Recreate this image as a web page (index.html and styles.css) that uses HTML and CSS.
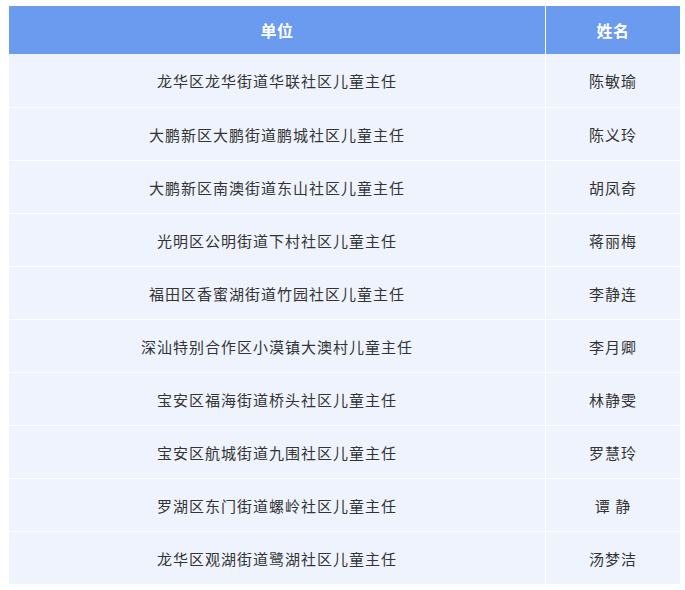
FILE: index.html
```html
<!DOCTYPE html>
<html lang="zh">
<head>
<meta charset="utf-8">
<link rel="stylesheet" href="styles.css">
</head>
<body>
<table class="roster">
  <thead>
    <tr><th class="unit">单位</th><th class="name">姓名</th></tr>
  </thead>
  <tbody>
    <tr><td>龙华区龙华街道华联社区儿童主任</td><td>陈敏瑜</td></tr>
    <tr><td>大鹏新区大鹏街道鹏城社区儿童主任</td><td>陈义玲</td></tr>
    <tr><td>大鹏新区南澳街道东山社区儿童主任</td><td>胡凤奇</td></tr>
    <tr><td>光明区公明街道下村社区儿童主任</td><td>蒋丽梅</td></tr>
    <tr><td>福田区香蜜湖街道竹园社区儿童主任</td><td>李静连</td></tr>
    <tr><td>深汕特别合作区小漠镇大澳村儿童主任</td><td>李月卿</td></tr>
    <tr><td>宝安区福海街道桥头社区儿童主任</td><td>林静雯</td></tr>
    <tr><td>宝安区航城街道九围社区儿童主任</td><td>罗慧玲</td></tr>
    <tr><td>罗湖区东门街道螺岭社区儿童主任</td><td>谭 静</td></tr>
    <tr><td>龙华区观湖街道鹭湖社区儿童主任</td><td>汤梦洁</td></tr>
  </tbody>
</table>
</body>
</html>
```

FILE: styles.css
```css
html, body {
  margin: 0;
  padding: 0;
  background: #ffffff;
}
body {
  padding: 6px 5px 0 9px;
  font-family: "Noto Sans CJK SC", "Noto Sans", sans-serif;
}
.roster {
  width: 671px;
  border-collapse: collapse;
  table-layout: fixed;
}
.roster th,
.roster td {
  padding: 0;
  text-align: center;
  border: none;
}
.roster th + th,
.roster td + td {
  border-left: 1px solid #ffffff;
}
.roster th {
  height: 48px;
  background: #6a9bee;
  color: #ffffff;
  font-size: 16px;
  font-weight: bold;
  letter-spacing: 0.5px;
}
.roster .unit { width: 536px; }
.roster td {
  height: 52px;
  background: #eff3fd;
  color: #333333;
  font-size: 15px;
  letter-spacing: 1px;
  border-bottom: 1px solid #ffffff;
}
.roster tbody tr:first-child td { height: 53px; }
.roster tbody tr:last-child td { border-bottom: none; }
```
